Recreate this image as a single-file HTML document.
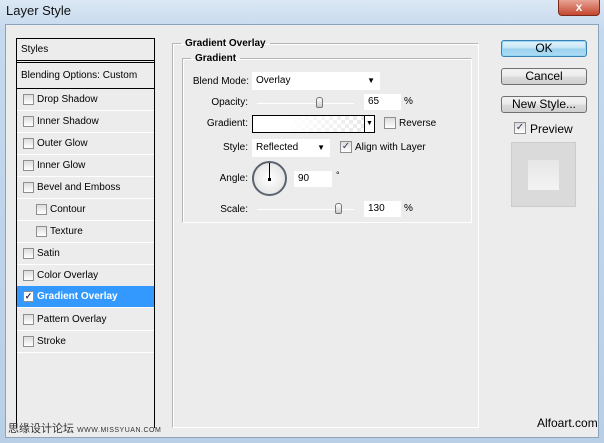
<!DOCTYPE html>
<html><head><style>
*{box-sizing:border-box;margin:0;padding:0}
body{width:604px;height:443px;overflow:hidden;background:#c9dcee;font-family:"Liberation Sans",sans-serif;font-size:11px;color:#000;position:relative}
.abs{position:absolute}
.title{left:6px;top:3px;font-size:13px;color:#111}
.frame{left:0;top:0;width:604px;height:443px;background:linear-gradient(#dbe7f4,#c5d9ee 30px,#b8cfe6)}
.client{left:5px;top:24px;width:594px;height:414px;background:#ececec;border:1px solid #8da3bb}
.close{left:558px;top:0;width:42px;height:16px;background:linear-gradient(#e8a395,#c4472f);border:1px solid #7b2a1c;border-top:none;border-radius:0 0 4px 4px;color:#fff;text-align:center;font-weight:bold;font-size:12px;line-height:14px}
.lp{left:16px;top:38px;width:139px;height:390px;border:1px solid #000;border-bottom:none;background:#ececec}
.row{position:absolute;left:0;width:137px;height:22px;border-bottom:1px solid #fff;line-height:21px;padding-left:20px;font-size:10px}
.cb{position:absolute;width:11px;height:11px;border:1px solid #8e8f8f;background:linear-gradient(#ddd,#fff)}
.row .cb{left:6px;top:5px}
.sel{background:#3399ff;color:#fff;font-weight:bold}
fieldset{position:absolute;border:1px solid #b5b5b5;border-right-color:#fff;border-bottom-color:#fff;box-shadow:1px 1px 0 #fff inset}
legend{font-weight:bold;padding:0 4px;margin-left:8px;font-size:10px}
.lbl{position:absolute;text-align:right;font-size:10px;width:70px}
.inp{position:absolute;background:#fff;height:18px;font-size:10px;line-height:18px;padding-left:4px}
.btn{position:absolute;left:501px;width:86px;height:17px;border:1px solid #707070;border-radius:3px;background:linear-gradient(#f2f2f2,#ebebeb 50%,#dcdcdc 50%,#cfcfcf);text-align:center;font-size:12px;line-height:15px}
.track{position:absolute;height:1px;background:#9a9a9a;border-bottom:1px solid #fff}
.thumb{position:absolute;width:7px;height:11px;border:1px solid #777;border-radius:3px 3px 2px 2px;background:linear-gradient(#fff,#ccc)}
</style></head><body>
<div class="abs frame"></div>
<div class="abs title">Layer Style</div>
<div class="abs close">x</div>
<div class="abs client"></div>

<div class="abs lp">
 <div class="row" style="top:0;height:24px;border-bottom:3px double #000;padding-left:4px;line-height:22px">Styles</div>
 <div class="row" style="top:26px;height:24px;border-bottom:1px solid #000;padding-left:4px;line-height:22px">Blending Options: Custom</div>
 <div class="row" style="top:50px"><span class="cb"></span>Drop Shadow</div>
 <div class="row" style="top:72px"><span class="cb"></span>Inner Shadow</div>
 <div class="row" style="top:94px"><span class="cb"></span>Outer Glow</div>
 <div class="row" style="top:116px"><span class="cb"></span>Inner Glow</div>
 <div class="row" style="top:138px"><span class="cb"></span>Bevel and Emboss</div>
 <div class="row" style="top:160px;padding-left:33px"><span class="cb" style="left:19px"></span>Contour</div>
 <div class="row" style="top:182px;padding-left:33px"><span class="cb" style="left:19px"></span>Texture</div>
 <div class="row" style="top:204px"><span class="cb"></span>Satin</div>
 <div class="row" style="top:226px"><span class="cb"></span>Color Overlay</div>
 <div class="row sel" style="top:247px;height:22px"><span class="cb" style="background:#fff;font-size:9px;line-height:9px;color:#335;text-align:center">✓</span>Gradient Overlay</div>
 <div class="row" style="top:270px"><span class="cb"></span>Pattern Overlay</div>
 <div class="row" style="top:292px"><span class="cb"></span>Stroke</div>
</div>

<fieldset style="left:172px;top:38px;width:307px;height:390px"><legend>Gradient Overlay</legend></fieldset>
<fieldset style="left:182px;top:53px;width:290px;height:170px"><legend>Gradient</legend></fieldset>

<div class="lbl" style="left:179px;top:76px">Blend Mode:</div>
<div class="inp" style="left:252px;top:72px;width:128px">Overlay<span style="position:absolute;right:5px;top:0;font-size:8px">▼</span></div>
<div class="lbl" style="left:178px;top:97px">Opacity:</div>
<div class="track" style="left:257px;top:103px;width:97px"></div>
<div class="thumb" style="left:316px;top:97px"></div>
<div class="inp" style="left:364px;top:94px;width:37px;height:16px;line-height:16px">65</div>
<div class="abs" style="left:404px;top:96px;font-size:10px">%</div>
<div class="lbl" style="left:178px;top:118px">Gradient:</div>
<div class="abs" style="left:252px;top:115px;width:123px;height:18px;border:1px solid #000;background:linear-gradient(90deg,#fff 30%,rgba(255,255,255,0)),repeating-conic-gradient(#e6e6e6 0 25%,#fff 0 50%) 0 0/8px 8px"></div>
<div class="abs" style="left:364px;top:115px;width:11px;height:18px;border:1px solid #000;background:#fff;font-size:7px;text-align:center;line-height:16px">▼</div>
<div class="cb abs" style="left:384px;top:117px;width:12px;height:12px"></div>
<div class="abs" style="left:399px;top:118px;font-size:10px">Reverse</div>
<div class="lbl" style="left:178px;top:142px">Style:</div>
<div class="inp" style="left:252px;top:139px;width:78px">Reflected<span style="position:absolute;right:5px;top:0;font-size:8px">▼</span></div>
<div class="cb abs" style="left:340px;top:141px;width:12px;height:12px;font-size:10px;line-height:10px;color:#335;text-align:center">✓</div>
<div class="abs" style="left:355px;top:142px;font-size:10px">Align with Layer</div>
<div class="lbl" style="left:178px;top:173px">Angle:</div>
<div class="abs" style="left:252px;top:161px;width:35px;height:35px;border-radius:50%;border:2px solid #5a6370;background:radial-gradient(#fff,#ddd)"></div>
<div class="abs" style="left:269px;top:163px;width:1px;height:16px;background:#000"></div>
<div class="abs" style="left:268px;top:178px;width:3px;height:3px;background:#000"></div>
<div class="inp" style="left:294px;top:171px;width:38px;height:16px;line-height:16px">90</div>
<div class="abs" style="left:336px;top:170px;font-size:9px">°</div>
<div class="lbl" style="left:178px;top:204px">Scale:</div>
<div class="track" style="left:257px;top:209px;width:97px"></div>
<div class="thumb" style="left:335px;top:203px"></div>
<div class="inp" style="left:364px;top:201px;width:37px;height:16px;line-height:16px">130</div>
<div class="abs" style="left:404px;top:203px;font-size:10px">%</div>

<div class="btn" style="top:40px;border-color:#3c7fb1;background:linear-gradient(#e5f4fc,#c4e5f6 50%,#98d1ef 50%,#b0dcf3);box-shadow:0 0 0 1px #8fd6f7 inset">OK</div>
<div class="btn" style="top:68px">Cancel</div>
<div class="btn" style="top:96px">New Style...</div>
<div class="cb abs" style="left:514px;top:122px;width:12px;height:12px;font-size:10px;line-height:10px;color:#335;text-align:center">✓</div>
<div class="abs" style="left:530px;top:122px;font-size:12px">Preview</div>
<div class="abs" style="left:511px;top:142px;width:65px;height:65px;background:#dadada;border:1px solid #ccc"></div>
<div class="abs" style="left:528px;top:160px;width:31px;height:30px;background:linear-gradient(#e6e6e6,#f3f3f3)"></div>

<div class="abs" style="left:8px;top:420px;font-family:'Liberation Sans','Noto Sans CJK SC',sans-serif;font-size:11px;color:#333">思缘设计论坛 <span style="font-size:7px;letter-spacing:0.5px">WWW.MISSYUAN.COM</span></div>
<div class="abs" style="left:537px;top:416px;font-size:12px;color:#000">Alfoart.com</div>
</body></html>
